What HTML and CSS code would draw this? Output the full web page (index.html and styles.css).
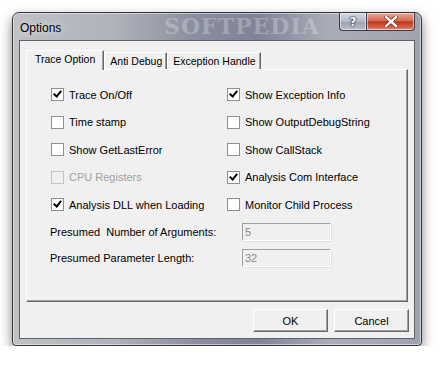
FILE: index.html
```html
<!DOCTYPE html>
<html lang="en">
<head>
  <meta charset="UTF-8">
  <title>Options</title>
  <link rel="stylesheet" href="styles.css">
</head>
<body>
  <div class="window">
    <div class="titlebar">
      <span class="title">Options</span>
      <span class="watermark">SOFTPEDIA</span>
      <div class="caption-buttons">
        <div class="cap-btn help">?</div>
        <div class="cap-btn close">
          <svg width="14" height="11" viewBox="0 0 14 11">
            <path d="M2 1 L12 10 M12 1 L2 10" stroke="#5a1a10" stroke-width="3.6" stroke-linecap="square"/>
            <path d="M2 1 L12 10 M12 1 L2 10" stroke="#fff" stroke-width="2.4" stroke-linecap="square"/>
          </svg>
        </div>
      </div>
    </div>

    <div class="client">
      <div class="tabs">
        <div class="tab active">Trace Option</div>
        <div class="tab">Anti Debug</div>
        <div class="tab">Exception Handle</div>
      </div>

      <div class="panel">
        <div class="checks">
          <label class="check"><span class="box checked"></span>Trace On/Off</label>
          <label class="check"><span class="box checked"></span>Show Exception Info</label>
          <label class="check"><span class="box"></span>Time stamp</label>
          <label class="check"><span class="box"></span>Show OutputDebugString</label>
          <label class="check"><span class="box"></span>Show GetLastError</label>
          <label class="check"><span class="box"></span>Show CallStack</label>
          <label class="check disabled"><span class="box"></span>CPU Registers</label>
          <label class="check"><span class="box checked"></span>Analysis Com Interface</label>
          <label class="check"><span class="box checked"></span>Analysis DLL when Loading</label>
          <label class="check"><span class="box"></span>Monitor Child Process</label>
        </div>

        <div class="field">
          <span class="field-label">Presumed&nbsp; Number of Arguments:</span>
          <div class="input">5</div>
        </div>
        <div class="field">
          <span class="field-label">Presumed Parameter Length:</span>
          <div class="input">32</div>
        </div>
      </div>

      <div class="actions">
        <button class="btn">OK</button>
        <button class="btn">Cancel</button>
      </div>
    </div>
  </div>
</body>
</html>
```

FILE: styles.css
```css
body {
  margin: 0;
  background: #fff;
  font-family: "Liberation Sans", Arial, sans-serif;
  font-size: 11px;
  color: #000;
}

.window {
  position: relative;
  margin: 12px 0 0 12px;
  width: 410px;
  height: 334px;
  box-sizing: border-box;
  border: 1px solid #33353c;
  border-radius: 7px 7px 4px 4px;
  padding: 0 6px 6px;
  display: flex;
  flex-direction: column;
  background: linear-gradient(90deg, #bfc1c6 0%, #afb2ba 25%, #8a8d9e 45%, #808396 60%, #aaadb9 78%, #9fa3b0 100%);
  box-shadow: 0 5px 12px rgba(0, 0, 0, 0.5), inset 0 0 0 1px rgba(255, 255, 255, 0.5);
}

.titlebar {
  height: 27px;
  flex-shrink: 0;
  display: flex;
  align-items: flex-start;
  position: relative;
}

.title {
  font-size: 12px;
  margin: 8px 0 0 1px;
  color: #000;
  text-shadow: 0 0 6px rgba(255, 255, 255, 0.9);
}

.watermark {
  position: absolute;
  left: 145px;
  top: 0;
  font-family: "DejaVu Serif", serif;
  font-weight: bold;
  font-size: 22px;
  letter-spacing: 1px;
  color: rgba(255, 255, 255, 0.25);
}

.caption-buttons {
  margin-left: auto;
  display: flex;
  position: relative;
}

.cap-btn {
  height: 17px;
  border: 1px solid #3a3d48;
  border-top: none;
  display: flex;
  align-items: center;
  justify-content: center;
  box-shadow: inset 0 0 0 1px rgba(255, 255, 255, 0.5);
}

.help {
  width: 26px;
  border-radius: 0 0 0 4px;
  border-right: none;
  background: linear-gradient(#d4d8e0, #b2b8c6 50%, #9aa1b2 51%, #b7bdca);
  color: #fff;
  font-family: "DejaVu Sans", sans-serif;
  font-weight: bold;
  font-size: 12px;
  text-shadow: 0 0 1px #222, 0 0 1px #222, 0 0 2px #222;
}

.close {
  width: 47px;
  border-radius: 0 0 4px 0;
  background: linear-gradient(#e9a896, #d66b53 45%, #c2371d 52%, #d0644b 85%, #e69a80);
}

.client {
  flex: 1;
  min-height: 0;
  border: 1px solid #5d616c;
  background: #f0f0f0;
  padding: 9px 6px 0 6px;
}

.tabs {
  display: flex;
  height: 19px;
  align-items: flex-end;
  position: relative;
  z-index: 1;
}

.tab {
  height: 16px;
  line-height: 16px;
  padding: 0 4px 0 5px;
  font-size: 10.5px;
  border: 1px solid #fff;
  border-bottom: none;
  border-right: 1px solid #696969;
  box-shadow: inset -1px 0 0 #a0a0a0;
  background: #f0f0f0;
}

.tab.active {
  height: 19px;
  line-height: 17px;
  padding: 0 8px;
  margin-bottom: -1px;
}

.panel {
  height: 233px;
  box-sizing: border-box;
  border: 1px solid #fff;
  border-right-color: #696969;
  border-bottom-color: #696969;
  box-shadow: inset -1px -1px 0 #a0a0a0;
  padding: 11px 0 0 24px;
}

.checks {
  display: grid;
  grid-template-columns: 176px 1fr;
  grid-auto-rows: 27.5px;
}

.check {
  display: flex;
  align-items: center;
}

.box {
  width: 11px;
  height: 11px;
  border: 1px solid #8e8f8f;
  background: #fff;
  margin-right: 5px;
  position: relative;
}

.box.checked::after {
  content: "";
  position: absolute;
  left: 3px;
  top: 0;
  width: 3px;
  height: 6px;
  border: solid #000;
  border-width: 0 2px 2px 0;
  transform: rotate(40deg);
}

.check.disabled {
  color: #a0a0a0;
}

.check.disabled .box {
  border-color: #c4c4c4;
  background: #f0f0f0;
}

.field {
  display: flex;
  align-items: center;
  height: 26px;
  margin-left: -1px;
}

.field-label {
  width: 192px;
}

.input {
  width: 85px;
  height: 16px;
  line-height: 16px;
  padding-left: 2px;
  border: 1px solid #a0a0a0;
  border-right-color: #fff;
  border-bottom-color: #fff;
  box-shadow: 1px 1px 0 #e3e3e3;
  color: #8a8a8a;
}

.actions {
  display: flex;
  justify-content: flex-end;
  gap: 6px;
  margin-top: 7px;
  margin-right: -1px;
}

.btn {
  width: 75px;
  height: 23px;
  font-family: "Liberation Sans", Arial, sans-serif;
  font-size: 11px;
  background: #f0f0f0;
  border: 1px solid #fff;
  border-right-color: #696969;
  border-bottom-color: #696969;
  box-shadow: inset -1px -1px 0 #a0a0a0;
  padding: 0;
  color: #000;
}
```
